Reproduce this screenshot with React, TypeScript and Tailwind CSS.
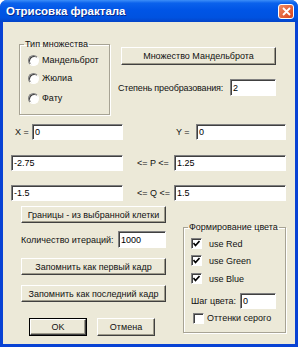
import type { ReactNode } from "react";

const font = { fontFamily: '"Liberation Sans", Arial, sans-serif' };

function Field({ value, className = "" }: { value: string; className?: string }) {
  return (
    <div
      className={`flex h-full items-center border border-t-[#808080] border-l-[#808080] border-b-white border-r-white bg-white pl-[2px] text-black shadow-[inset_1px_1px_0_#404040] ${className}`}
    >
      {value}
    </div>
  );
}

function Button({ children, className = "" }: { children: ReactNode; className?: string }) {
  return (
    <div
      className={`flex items-center justify-center border border-t-white border-l-white border-b-[#404040] border-r-[#404040] bg-[#ECE9D8] shadow-[inset_-1px_-1px_0_#9d9a8a] ${className}`}
    >
      {children}
    </div>
  );
}

function Radio({ label, className = "" }: { label: string; className?: string }) {
  return (
    <div className={`flex h-[16px] items-center gap-[3px] ${className}`}>
      <span className="h-[11px] w-[11px] rounded-full border border-t-[#808080] border-l-[#808080] border-b-white border-r-white bg-white shadow-[inset_1px_1px_0_#404040]" />
      <span>{label}</span>
    </div>
  );
}

function Check({ checked }: { checked: boolean }) {
  return (
    <span className="flex h-[11px] w-[11px] items-center justify-center border border-t-[#808080] border-l-[#808080] border-b-white border-r-white bg-white shadow-[inset_1px_1px_0_#404040]">
      {checked && (
        <svg width="7" height="7" viewBox="0 0 7 7">
          <polyline points="0.5,3 2.5,5.5 6.5,1" fill="none" stroke="#000" strokeWidth="1.6" />
        </svg>
      )}
    </span>
  );
}

const groupLine =
  "border border-[#a7a394] shadow-[inset_1px_1px_0_#fff,1px_1px_0_#fff]";

export default function App() {
  return (
    <div
      style={font}
      className="flex h-[347px] w-[298px] flex-col overflow-hidden whitespace-nowrap rounded-t-[7px] bg-[#0842d4] text-[9px] leading-[12px] text-[#111]"
    >
      <div className="flex h-[22px] shrink-0 items-center justify-between bg-[linear-gradient(to_bottom,#3d8ff8_0%,#0b62ec_14%,#0055e6_45%,#0052e0_80%,#0444c8_100%)] pl-[6px] pr-[4px]">
        <span className="text-[11.5px] font-bold text-white [text-shadow:1px_1px_0_#0a2a8a]">
          Отрисовка фрактала
        </span>
        <span className="flex h-[15px] w-[16px] items-center justify-center rounded-[3px] border border-white bg-[linear-gradient(135deg,#f08a62,#d9441c)]">
          <svg width="9" height="9" viewBox="0 0 9 9">
            <path d="M1 1 L8 8 M8 1 L1 8" stroke="#fff" strokeWidth="1.8" />
          </svg>
        </span>
      </div>

      <div className="mx-[3px] mb-[3px] flex flex-1 flex-col bg-[#ECE9D8]">
        <div className="ml-[16px] mt-[16px] flex">
          <fieldset className={`h-[77px] w-[91px] ${groupLine}`}>
            <legend className="ml-[4px] px-[1px] leading-[12px]">Тип множества</legend>
            <div className="flex flex-col pl-[8px]">
              <Radio label="Мандельброт" className="mt-[2px]" />
              <Radio label="Жюлиа" className="mt-[2px]" />
              <Radio label="Фату" className="mt-[4px]" />
            </div>
          </fieldset>
          <div className="ml-[11px] flex w-[155px] flex-col">
            <Button className="mt-[9px] h-[18px]">Множество Мандельброта</Button>
            <div className="-ml-[3px] mt-[14px] flex h-[17px] items-center">
              <span className="tracking-[-0.15px]">Степень преобразования:</span>
              <Field value="2" className="ml-auto w-[46px]" />
            </div>
          </div>
        </div>

        <div className="ml-[12px] mt-[9px] flex h-[16px] items-center">
          <span className="w-[17px]">X =</span>
          <Field value="0" className="w-[91px]" />
          <span className="ml-[53px] w-[20px]">Y =</span>
          <Field value="0" className="w-[90px]" />
        </div>

        <div className="ml-[8px] mt-[15px] flex h-[16px] items-center">
          <Field value="-2.75" className="w-[112px]" />
          <span className="w-[51px] pl-[14px]">{"<= P <="}</span>
          <Field value="1.25" className="w-[112px]" />
        </div>

        <div className="ml-[8px] mt-[14px] flex h-[16px] items-center">
          <Field value="-1.5" className="w-[112px]" />
          <span className="w-[51px] pl-[14px]">{"<= Q <="}</span>
          <Field value="1.5" className="w-[112px]" />
        </div>

        <div className="flex">
          <div className="ml-[18px] flex w-[145px] flex-col">
            <Button className="mt-[5px] h-[17px]">Границы - из выбранной клетки</Button>
            <div className="mt-[8px] flex h-[17px] items-center justify-between">
              <span>Количество итераций:</span>
              <Field value="1000" className="w-[48px]" />
            </div>
            <Button className="mt-[10px] h-[17px]">Запомнить как первый кадр</Button>
            <Button className="mt-[10px] h-[17px]">Запомнить как последний кадр</Button>
            <div className="mt-[16px] flex h-[18px]">
              <div className="ml-[8px] w-[58px] border border-black">
                <Button className="h-full">OK</Button>
              </div>
              <Button className="ml-[10px] w-[58px]">Отмена</Button>
            </div>
          </div>

          <fieldset className={`ml-[17px] mt-[20px] h-[112px] w-[103px] ${groupLine}`}>
            <legend className="ml-[4px] px-[1px] leading-[12px]">Формирование цвета</legend>
            <div className="flex flex-col">
              <div className="mt-[2px] flex h-[17px] items-center gap-[7px] pl-[7px]">
                <Check checked />
                <span>use Red</span>
              </div>
              <div className="flex h-[17px] items-center gap-[7px] pl-[7px]">
                <Check checked />
                <span>use Green</span>
              </div>
              <div className="mt-[1px] flex h-[17px] items-center gap-[7px] pl-[7px]">
                <Check checked />
                <span>use Blue</span>
              </div>
              <div className="mt-[6px] flex h-[16px] items-center pl-[7px] pr-[9px]">
                <span>Шаг цвета:</span>
                <Field value="0" className="ml-auto w-[36px]" />
              </div>
              <div className="mt-[1px] flex h-[16px] items-center gap-[3px] pl-[9px]">
                <Check checked={false} />
                <span>Оттенки серого</span>
              </div>
            </div>
          </fieldset>
        </div>
      </div>
    </div>
  );
}
